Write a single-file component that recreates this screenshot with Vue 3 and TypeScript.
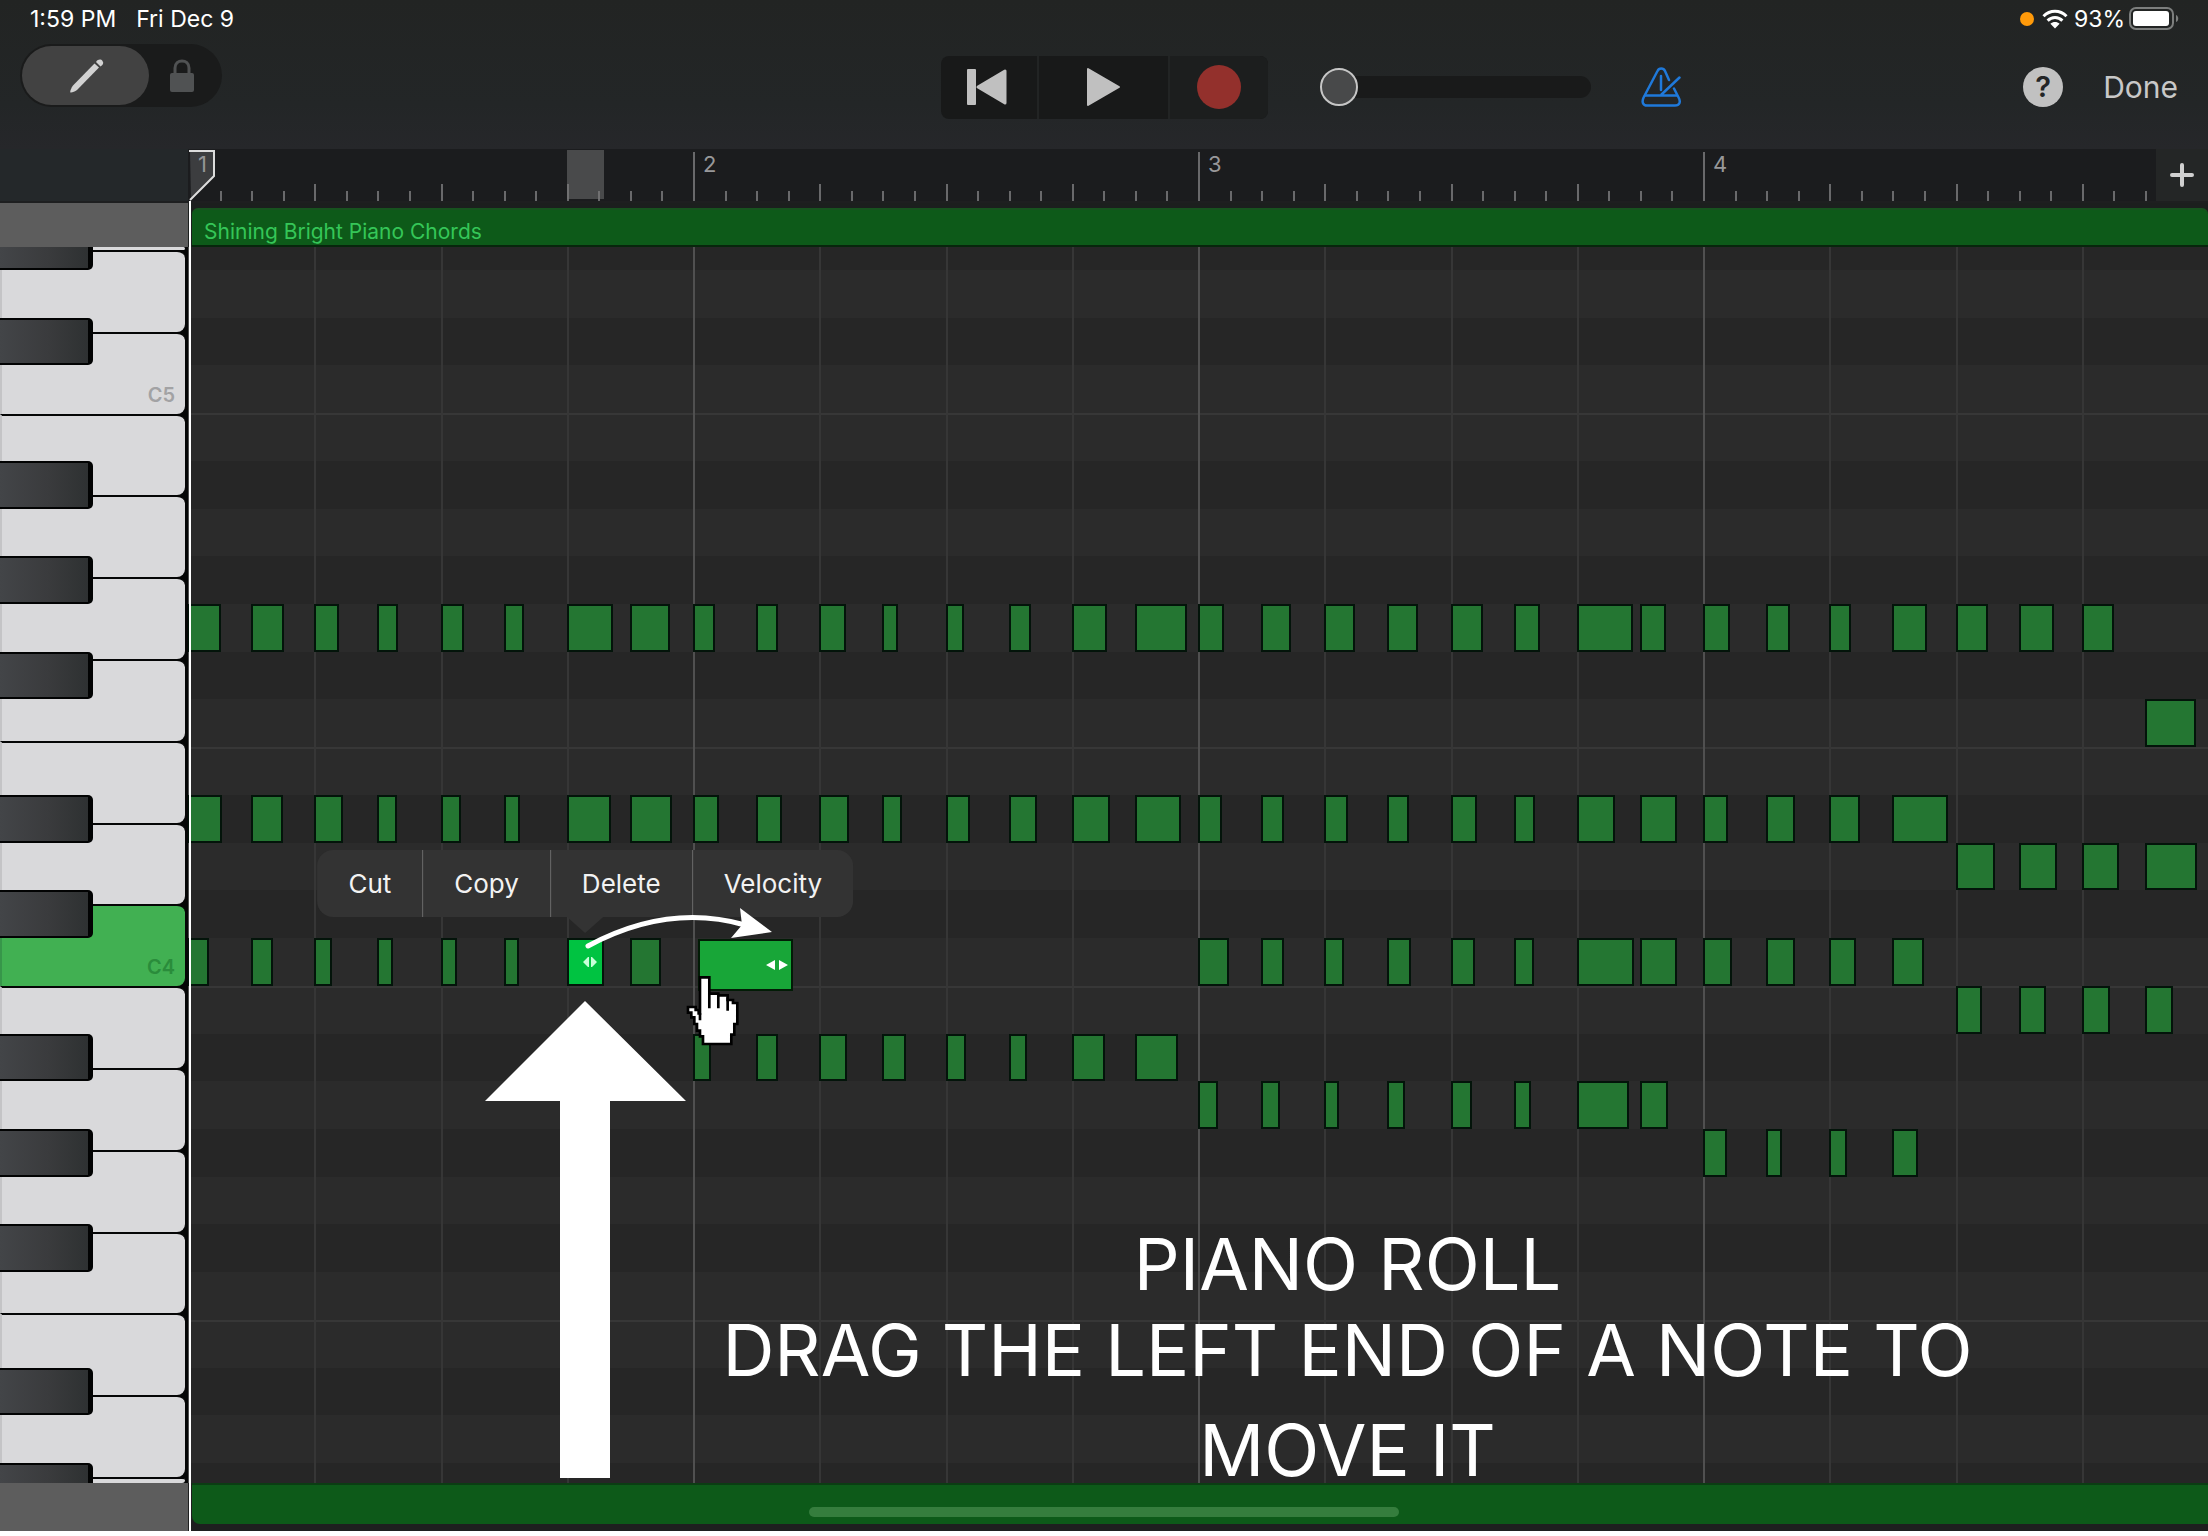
<script setup lang="ts">
import { ref } from 'vue'

interface Note {
  step: number
  length: number
  selected?: boolean
}

interface Row {
  pitch: string
  notes: Note[]
}

const STEPS = 32
const TOTAL_LENGTH = 2020

const names = ['C', 'C#', 'D', 'D#', 'E', 'F', 'F#', 'G', 'G#', 'A', 'A#', 'B']

const sequence = (start: number, lengths: number[]): Note[] =>
  lengths.map((length, i) => ({ step: start + i, length }))

const notesByPitch: Record<string, Note[]> = {
  G4: sequence(0, [
    33, 33, 25, 21, 23, 20, 46, 40, 22, 22, 27, 16, 18, 22, 35, 52,
    26, 30, 31, 31, 32, 26, 56, 26, 27, 24, 22, 35, 32, 35, 32,
  ]),
  F4: sequence(31, [51]),
  'D#4': sequence(0, [
    34, 32, 29, 20, 20, 16, 44, 42, 26, 26, 30, 20, 25, 28, 38, 46,
    24, 23, 24, 22, 26, 21, 38, 37, 25, 29, 31, 56,
  ]),
  D4: sequence(28, [39, 38, 37, 52]),
  C4: [
    ...sequence(0, [21, 22, 18, 16, 16, 15]),
    { step: 6, length: 37, selected: true },
    { step: 7, length: 31 },
    ...sequence(16, [31, 23, 20, 24, 25, 20, 57, 37, 29, 29, 27, 32]),
  ],
  B3: sequence(28, [26, 27, 28, 28]),
  'A#3': sequence(8, [18, 22, 28, 24, 20, 18, 33, 43]),
  A3: sequence(16, [20, 19, 15, 18, 21, 17, 52, 28]),
  'G#3': sequence(24, [24, 16, 18, 26]),
}

/* Rows run downwards from D#5 to C#3; MIDI number 75 is D#5. */
const rows: Row[] = Array.from({ length: 27 }, (_, i) => {
  const midi = 75 - i
  const pitch = names[midi % 12] + (Math.floor(midi / 12) - 1)
  return { pitch, notes: notesByPitch[pitch] ?? [] }
})

const whiteKeys: string[] = [
  'E5', 'D5', 'C5', 'B4', 'A4', 'G4', 'F4', 'E4', 'D4',
  'C4', 'B3', 'A3', 'G3', 'F3', 'E3', 'D3', 'C3',
]

const isSharp = (pitch: string) => pitch.includes('#')
const opensGroup = (pitch: string) => pitch[0] === 'B' || pitch[0] === 'E'

const left = (n: Note) => `${(n.step / STEPS) * 100}%`
const width = (n: Note) => `${(n.length / TOTAL_LENGTH) * 100}%`
const centre = (n: Note) =>
  `${(n.step / STEPS + n.length / 2 / TOTAL_LENGTH) * 100}%`

const selection: Note = { step: 6, length: 37 }
const actions = ['Cut', 'Copy', 'Delete', 'Velocity']
const ticks = Array.from({ length: 64 }, (_, i) => i)
const volume = ref(0)
</script>

<template>
  <div class="app">
    <header class="top">
      <div class="status">
        <span>1:59 PM</span>
        <span class="date">Fri Dec 9</span>
        <span class="mic-dot"></span>
        <svg class="wifi" viewBox="0 0 26 20" width="26" height="20">
          <g fill="none" stroke="#fff" stroke-width="3">
            <path d="M1.5 7.2C8 .6 18 .6 24.500 7.200" />
            <path d="M5.600 11.600C9.800 7.400 16.200 7.400 20.400 11.600" />
          </g>
          <path fill="#fff" d="M13 19.500 8.400 14.800C11 12.400 15 12.400 17.600 14.800Z" />
        </svg>
        <span class="percent">93%</span>
        <svg class="battery" viewBox="0 0 51 24" width="51" height="24">
          <rect x="1" y="1" width="43" height="21" rx="6" fill="none" stroke="#7c7e7d" stroke-width="2" />
          <rect x="4" y="4" width="36" height="15" rx="3" fill="#fff" />
          <path d="M47 8c3 1 3 6 0 7z" fill="#7c7e7d" />
        </svg>
      </div>

      <div class="toolbar">
        <div class="segment">
          <button class="seg active" type="button" aria-label="Edit">
            <svg viewBox="0 0 36 36" width="36" height="36">
              <path fill="#d2d2d2" d="M26.500 5.500 31 9.500 9 32c-2 1.500-5.500 3-6.500 2.500S3.500 29.500 5 27.500Z" />
              <path fill="#d2d2d2" d="M28 4c2-3 5-3 6.500-1S35 7 32.500 8.500Z" />
            </svg>
          </button>
          <button class="seg lock" type="button" aria-label="Lock">
            <svg viewBox="0 0 24 34" width="24" height="34">
              <path d="M5 16V9C5-.5 19-.5 19 9v7" fill="none" stroke="#505253" stroke-width="3" />
              <rect x="0" y="14" width="24" height="19" rx="2" fill="#505253" />
            </svg>
          </button>
        </div>

        <div class="transport">
          <button class="rewind" type="button" aria-label="Go to beginning">
            <svg viewBox="0 0 40 40" width="40" height="40">
              <rect x="0" y="2" width="9" height="36" rx="1" fill="#c0c0c0" />
              <path d="M38 4v32L11 20Z" fill="#c0c0c0" stroke="#c0c0c0" stroke-width="3" stroke-linejoin="round" />
            </svg>
          </button>
          <button class="play" type="button" aria-label="Play">
            <svg viewBox="0 0 36 40" width="36" height="40">
              <path d="M3 2v36L34 20Z" fill="#c0c0c0" stroke="#c0c0c0" stroke-width="2" stroke-linejoin="round" />
            </svg>
          </button>
          <button class="record" type="button" aria-label="Record"><i></i></button>
        </div>

        <div class="right">
          <input v-model="volume" class="volume" type="range" min="0" max="100" aria-label="Volume" />
          <button class="metronome" type="button" aria-label="Metronome">
            <svg viewBox="0 0 40 40" width="40" height="40" fill="none" stroke="#1f79da" stroke-width="2.500" stroke-linecap="round" stroke-linejoin="round">
              <path d="M28 13 24 4C22.500 .8 18 .8 16.500 4L2.600 30.500C.5 35 2 38.500 6 38.500H34C38.500 38.500 40 35 37.600 30.500L33 21.500" />
              <path d="M4 28.500H36M20 9V23M20.500 27.500 38.500 10.500" />
            </svg>
          </button>
          <button class="help" type="button" aria-label="Help">?</button>
          <button class="done" type="button">Done</button>
        </div>
      </div>
    </header>

    <main class="editor">
      <div class="corner"></div>
      <div class="ruler">
        <div v-for="t in ticks" :key="t" class="cell">
          <i :class="{ beat: t % 4 === 0, bar: t % 16 === 0 }"></i>
          <span v-if="t % 16 === 0">{{ t / 16 + 1 }}</span>
        </div>
        <div class="range" :style="{ left: left(selection), width: width(selection) }"></div>
        <button class="add" type="button" aria-label="Add section">
          <svg viewBox="0 0 24 24" width="24" height="24">
            <path d="M12 2V22M2 12H22" stroke="#d0d0d0" stroke-width="4" stroke-linecap="round" />
          </svg>
        </button>
      </div>

      <div class="side-cap"></div>
      <div class="region"><div class="region-bar">Shining Bright Piano Chords</div></div>

      <div class="keyboard">
        <div class="white-keys">
          <div v-for="k in whiteKeys" :key="k" class="white" :class="{ held: k === 'C4' }">
            <span v-if="k === 'C5' || k === 'C4'">{{ k }}</span>
          </div>
        </div>
        <div class="black-keys lanes">
          <div v-for="r in rows" :key="r.pitch" :class="{ black: isSharp(r.pitch) }"></div>
        </div>
      </div>

      <div class="roll">
        <div class="lanes">
          <div
            v-for="r in rows"
            :key="r.pitch"
            class="lane"
            :class="{ sharp: isSharp(r.pitch), split: opensGroup(r.pitch) }"
          ></div>
        </div>
        <div class="beats">
          <i v-for="b in 16" :key="b" :class="{ bar: b % 4 === 1 }"></i>
        </div>
        <div class="lanes">
          <div v-for="r in rows" :key="r.pitch" class="track">
            <template v-for="n in r.notes" :key="n.step">
              <div class="note" :class="{ selected: n.selected }" :style="{ left: left(n), width: width(n) }">
                <svg v-if="n.selected" viewBox="0 0 14 12" width="14" height="12">
                  <path d="M0 6 5 1H6V11H5ZM14 6 9 1H8V11H9Z" fill="#c8ffd8" />
                </svg>
              </div>
              <div v-if="n.selected" class="menu" :style="{ left: centre(n) }">
                <button v-for="a in actions" :key="a" type="button">{{ a }}</button>
              </div>
            </template>
          </div>
        </div>
        <svg class="marks" viewBox="0 0 2020 1236" preserveAspectRatio="none">
          <rect x="511" y="693" width="93" height="50" fill="#18a638" stroke="#021c06" stroke-width="2" />
          <path d="M578 718 587 713V723ZM600 718 591 713V723Z" fill="#fff" />
          <path d="M400 699Q480 656 557 678" fill="none" stroke="#fff" stroke-width="5" stroke-linecap="round" />
          <path d="M552 661 584 685 543 691 554 678Z" fill="#fff" />
          <path d="M397 754 498 854H422V1231H372V854H297Z" fill="#fff" />
          <g transform="translate(372 593) scale(.3333)">
            <path
              d="M420 412H448V461H475V466H503V480H519V489H532V552H523V584H514V612H429V589H420V572H411V552H403V532H394V518H384V501H407V510H416V520H420Z"
              fill="#fff"
              stroke="#000"
              stroke-width="8"
            />
            <path d="M448 458V505M475 464V505M503 472V512M420 520V541" stroke="#000" stroke-width="8" />
          </g>
        </svg>
        <div class="caption">
          <h1>PIANO ROLL</h1>
          <p>DRAG THE LEFT END OF A NOTE TO MOVE IT</p>
        </div>
      </div>

      <div class="side-cap"></div>
      <div class="foot"><div class="foot-bar"></div></div>

      <div class="playhead">
        <svg viewBox="0 0 27 52" width="27" height="52">
          <path d="M1 2H25V27L2 51Z" fill="#8a8a8f" fill-opacity=".3" />
          <path d="M0 2H25V27L1 51" fill="none" stroke="#dcdcdc" stroke-width="2" />
        </svg>
      </div>
      <div class="home"></div>
    </main>
  </div>
</template>

<style>
body {
  margin: 0;
  background: #fff;
}
</style>

<style scoped>
.app {
  display: flex;
  flex-direction: column;
  height: calc(100vh - 5px);
  min-height: 900px;
  font-family: Inter, 'Liberation Sans', sans-serif;
  color: #fff;
  background: #1e1f20;
  overflow: hidden;
}

button {
  margin: 0;
  padding: 0;
  border: 0;
  background: none;
  color: inherit;
  font: inherit;
}

svg {
  display: block;
}

.top {
  background: linear-gradient(#222423, #232627 70%, #26272a);
}

.status {
  display: flex;
  align-items: center;
  height: 38px;
  padding: 0 28px 0 30px;
  font-size: 23px;
  line-height: 28px;
}

.date {
  margin-left: 20px;
}

.mic-dot {
  width: 14px;
  height: 14px;
  margin-left: auto;
  border-radius: 50%;
  background: #ff9a0a;
}

.wifi {
  margin-left: 8px;
}

.percent {
  margin-left: 6px;
}

.battery {
  margin-left: 4px;
}

.toolbar {
  display: grid;
  grid-template-columns: 1fr auto 1fr;
  align-items: center;
  height: 98px;
  padding: 0 20px 13px;
}

.segment {
  display: flex;
  align-self: start;
  justify-self: start;
  height: 59px;
  margin-top: 6px;
  padding: 2px;
  border-radius: 32px;
  background: #1a1b1b;
}

.seg {
  display: flex;
  align-items: center;
  justify-content: center;
}

.seg.active {
  width: 127px;
  border-radius: 30px;
  background: #424242;
}

.seg.lock {
  width: 71px;
  padding-right: 6px;
  box-sizing: border-box;
}

.transport {
  display: flex;
  height: 63px;
  border-radius: 8px;
  overflow: hidden;
  background: #181919;
}

.transport button {
  display: flex;
  align-items: center;
  justify-content: center;
  box-sizing: border-box;
}

.rewind {
  width: 98px;
  padding-right: 4px;
  border-right: 2px solid #222424;
}

.play {
  width: 131px;
  border-right: 2px solid #222424;
}

.record {
  width: 98px;
  background: #1c1e1e;
}

.record i {
  width: 44px;
  height: 44px;
  border-radius: 50%;
  background: #93302c;
}

.right {
  display: flex;
  align-items: center;
}

.volume {
  appearance: none;
  width: 271px;
  height: 38px;
  margin: 0 0 0 52px;
  background: none;
}

.volume::-webkit-slider-runnable-track {
  height: 22px;
  border-radius: 11px;
  background: #191a1a;
}

.volume::-webkit-slider-thumb {
  appearance: none;
  box-sizing: border-box;
  width: 38px;
  height: 38px;
  margin-top: -8px;
  border: 2px solid #c6c6c6;
  border-radius: 50%;
  background: #48494a;
}

.metronome {
  margin-left: 50px;
}

.help {
  width: 40px;
  height: 40px;
  margin-left: auto;
  border-radius: 50%;
  background: #c1c1c1;
  color: #232526;
  font-size: 29px;
  font-weight: 600;
  line-height: 40px;
}

.done {
  margin: 0 10px 0 40px;
  color: #c8c8c8;
  font-size: 30px;
  line-height: 40px;
}

.editor {
  position: relative;
  display: grid;
  flex: 1;
  grid-template-columns: 188px 1fr;
  grid-template-rows: 54px 44px minmax(0, 1fr) 48px;
  min-height: 0;
}

.corner {
  margin-bottom: 2px;
  background: #24282a;
}

.ruler {
  position: relative;
  display: flex;
  height: 52px;
  background: #1b1c1e;
}

.cell {
  position: relative;
  display: flex;
  flex: 1;
  align-items: flex-end;
  min-width: 0;
}

.cell i {
  flex: none;
  width: 2px;
  height: 10px;
  background: #69696b;
}

.cell i.beat {
  height: 17px;
}

.cell i.bar {
  height: 49px;
}

.cell:first-child i {
  visibility: hidden;
}

.cell span {
  align-self: flex-start;
  margin: 1px 0 0 8px;
  color: #98989a;
  font-size: 22px;
  line-height: 28px;
}

.range {
  position: absolute;
  top: 1px;
  bottom: 2px;
  background: rgba(120, 120, 120, 0.5);
}

.add {
  position: absolute;
  top: 0;
  right: 0;
  bottom: 0;
  display: flex;
  align-items: center;
  justify-content: center;
  width: 52px;
  background: #242626;
}

.side-cap {
  background: #5d5d5d;
}

.region {
  padding-top: 5px;
  background: #1c1f1e;
}

.region-bar {
  box-sizing: border-box;
  height: 39px;
  margin-left: 4px;
  padding: 8px 12px 0;
  border-top: 2px solid #17531f;
  border-bottom: 2px solid #07260c;
  border-radius: 6px 6px 0 0;
  background: #0d5a19;
  color: #35c658;
  font-size: 21px;
  line-height: 28px;
  white-space: nowrap;
}

.keyboard,
.roll {
  position: relative;
  display: grid;
  grid-template-rows: minmax(0, 1fr);
  grid-template-columns: minmax(0, 1fr);
  min-height: 0;
}

.keyboard {
  padding-right: 3px;
  background: #050606;
}

.keyboard > *,
.roll > .lanes,
.roll > .beats {
  grid-area: 1 / 1;
}

.white-keys {
  display: grid;
  grid-template-rows: 3fr repeat(15, 82fr) 6fr;
  overflow: hidden;
}

.white {
  display: flex;
  align-items: flex-end;
  justify-content: flex-end;
  box-sizing: border-box;
  min-height: 0;
  padding: 0 10px 7px;
  border-top: 2px solid #050606;
  border-left: 2px solid #c4c4c6;
  border-radius: 0 8px 8px 0;
  background: #d9d9db;
  color: #a2a2a4;
  font-size: 20px;
  font-weight: 600;
  line-height: 24px;
}

.white:first-child,
.white:last-child {
  padding: 0;
}

.white:first-child {
  border-top: 0;
}

.white.held {
  border-left-color: #37964a;
  background: #41b052;
  color: #2a8c3b;
}

.lanes {
  display: grid;
  grid-template-rows: 23fr repeat(25, 48fr) 20fr;
}

.lanes > * {
  min-height: 0;
}

.black-keys {
  width: 93px;
}

.black {
  box-sizing: border-box;
  border: solid #020303;
  border-width: 2px 5px 2px 0;
  border-radius: 0 5px 5px 0;
  background: linear-gradient(90deg, #434548, #3a3b3d 55%, #2e3132);
}

.black:first-child {
  border-top: 0;
  border-top-right-radius: 0;
}

.black:last-child {
  border-bottom: 0;
  border-bottom-right-radius: 0;
}

.lane {
  box-sizing: border-box;
  background: #2b2b2b;
}

.lane.sharp {
  background: #262626;
}

.lane.split {
  border-top: 2px solid #373737;
}

.beats {
  display: flex;
}

.beats i {
  flex: 1;
  border-left: 2px solid #363636;
}

.beats i.bar {
  border-left-color: #505050;
}

.track {
  position: relative;
}

.note {
  position: absolute;
  top: 0;
  bottom: 0;
  box-sizing: border-box;
  border: 2px solid #03140a;
  background: #247632;
}

.note.selected {
  display: flex;
  align-items: center;
  justify-content: flex-end;
  padding-right: 5px;
  background: #00c341;
}

.menu {
  position: absolute;
  bottom: calc(100% + 21px);
  display: flex;
  border-radius: 16px;
  background: #333;
  transform: translateX(-50%);
}

.menu::after {
  content: '';
  position: absolute;
  top: 100%;
  left: 50%;
  border: solid transparent;
  border-width: 16px 18px 0;
  border-top-color: #333;
  transform: translateX(-50%);
}

.menu button {
  height: 67px;
  padding: 0 31px;
  color: #f2f2f2;
  font-size: 26px;
  line-height: 32px;
}

.menu button + button {
  border-left: 1px solid #6a6a6a;
}

.marks {
  position: absolute;
  inset: 0;
  width: 100%;
  height: 100%;
  pointer-events: none;
}

.caption {
  position: absolute;
  right: 4px;
  bottom: -17px;
  left: 15%;
  z-index: 1;
  font-size: 72px;
  text-align: center;
  pointer-events: none;
}

.caption h1 {
  margin: 0;
  font-size: 72px;
  font-weight: 400;
  line-height: 72px;
}

.caption p {
  max-width: 1320px;
  margin: 0 auto;
  line-height: 100px;
}

.foot {
  background: #1e1f1f;
}

.foot-bar {
  box-sizing: border-box;
  height: 41px;
  margin-left: 4px;
  border-top: 2px solid #0b3d13;
  border-radius: 0 0 0 8px;
  background: #0d5a19;
}

.playhead {
  position: absolute;
  top: 52px;
  bottom: 0;
  left: 189px;
  width: 2px;
  background: #fff;
}

.playhead svg {
  position: absolute;
  bottom: 100%;
  left: 0;
}

.home {
  position: absolute;
  bottom: 14px;
  left: 50%;
  width: 590px;
  height: 10px;
  border-radius: 5px;
  background: #357d3d;
  transform: translateX(-50%);
}
</style>
